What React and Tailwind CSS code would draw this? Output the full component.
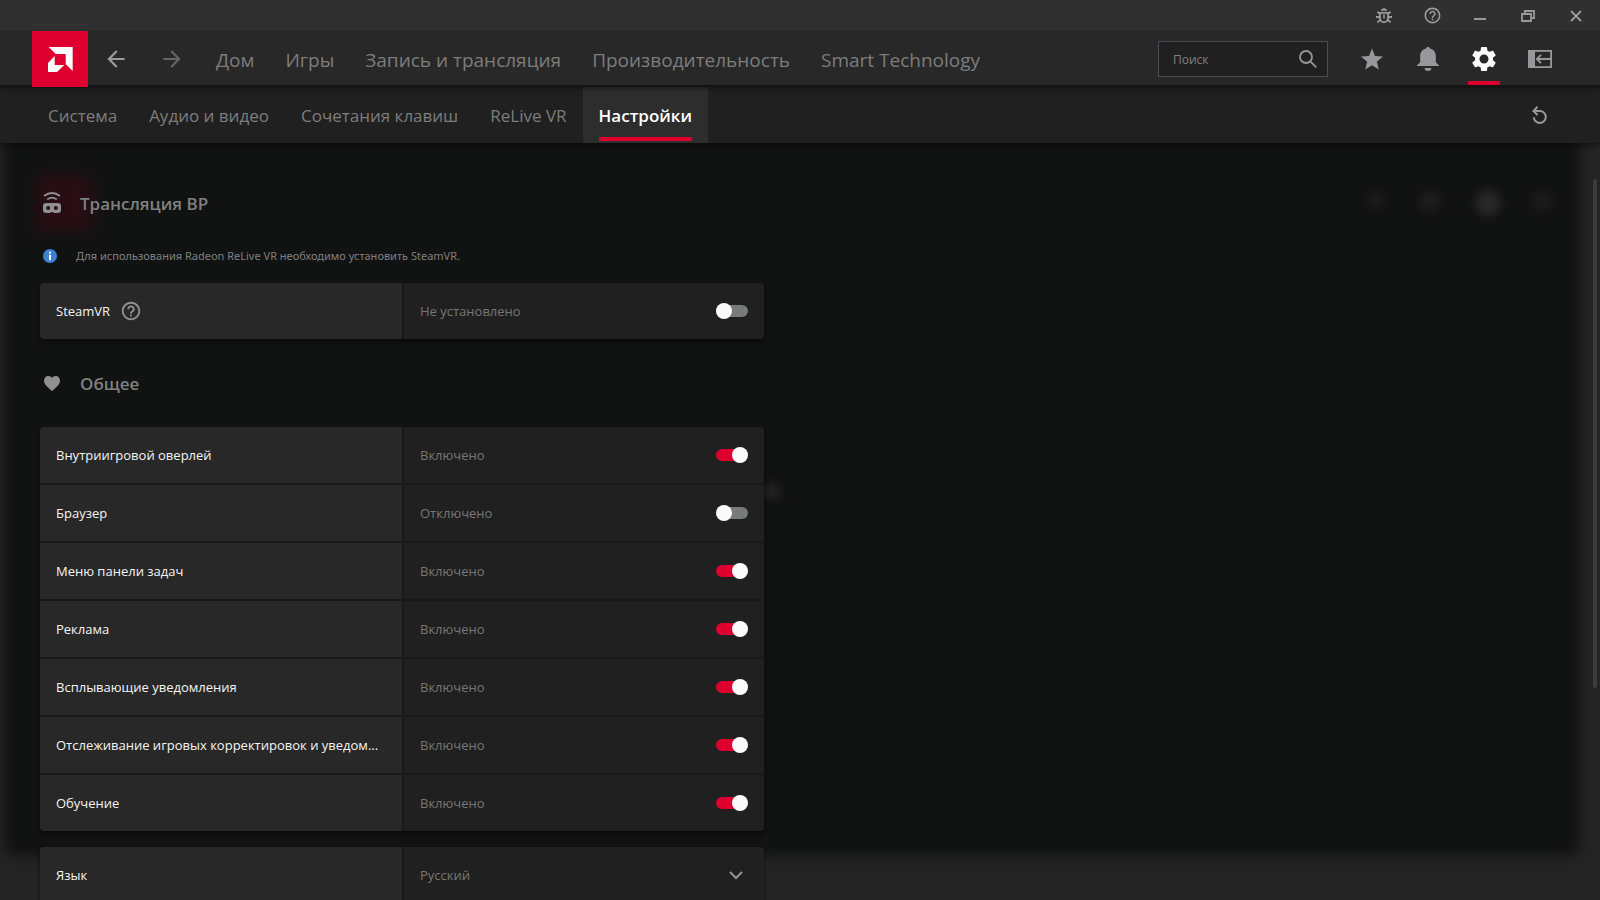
import { useState } from "react";
import { MdArrowBack, MdArrowForward, MdHelpOutline, MdSettings } from "react-icons/md";

const mainTabs = ["Дом", "Игры", "Запись и трансляция", "Производительность", "Smart Technology"];

const subTabs = ["Система", "Аудио и видео", "Сочетания клавиш", "ReLive VR", "Настройки"];

const generalOptions = [
  { id: "overlay", label: "Внутриигровой оверлей", on: true },
  { id: "browser", label: "Браузер", on: false },
  { id: "tray", label: "Меню панели задач", on: true },
  { id: "ads", label: "Реклама", on: true },
  { id: "toasts", label: "Всплывающие уведомления", on: true },
  { id: "tracking", label: "Отслеживание игровых корректировок и уведом...", on: true },
  { id: "tutorial", label: "Обучение", on: true },
];

function Logo() {
  return (
    <svg width="25" height="25" viewBox="0 0 25 25" fill="#fafafa">
      <path d="M.7 0H24.7V24L17.7 17.3V7H7.7Z" />
      <path d="M6.7 9V18H16.3L9 25H0V16Z" />
    </svg>
  );
}

function BugIcon() {
  return (
    <svg width="16" height="16" viewBox="0 0 16 16" fill="none" stroke="currentColor" strokeWidth="1.8">
      <path d="M5 2.8a3 2.6 0 0 1 6 0z" fill="currentColor" stroke="none" />
      <path d="M4 4.8h8v5.4a4 4 0 0 1-8 0z" />
      <path d="M8 6.500v4" strokeWidth="1.600" />
      <path d="M4 6 1.4 3.8M12 6l2.6-2.2M4 9H0M12 9h4M4.4 11.6l-3 2.8M11.6 11.6l3 2.8" />
    </svg>
  );
}

function MinimizeIcon() {
  return (
    <svg width="14" height="14" viewBox="0 0 14 14" fill="currentColor">
      <path d="M1 9h12v2H1z" />
    </svg>
  );
}

function RestoreIcon() {
  return (
    <svg width="14" height="12" viewBox="0 0 14 12" fill="none" stroke="currentColor" strokeWidth="1.8">
      <path d="M1 4h9v7H1z" />
      <path d="M3.8 4V1H13v7h-3" />
    </svg>
  );
}

function CloseIcon() {
  return (
    <svg width="12" height="12" viewBox="0 0 12 12" stroke="currentColor" strokeWidth="1.8">
      <path d="M1 1l10 10M11 1 1 11" />
    </svg>
  );
}

function SearchIcon() {
  return (
    <svg width="18" height="18" viewBox="0 0 18 18" fill="none" stroke="currentColor" strokeWidth="1.8">
      <circle cx="7" cy="7" r="6" />
      <path d="m11.3 11.3 6 6" />
    </svg>
  );
}

function StarIcon() {
  return (
    <svg width="22" height="22" viewBox="0 0 22 22" fill="currentColor">
      <path d="m11 .6 3 7.4 8 .6-6.1 5.1 1.9 7.7-6.8-4.2-6.8 4.2 1.9-7.7L0 8.6 8 8z" />
    </svg>
  );
}

function BellIcon() {
  return (
    <svg width="24" height="24" viewBox="0 0 24 24" fill="currentColor">
      <path d="M12 0c1.2 0 1.8.7 2 1.6C17.6 2.5 19.8 5.4 19.8 9v6.2L23.6 19H.4l3.800-3.800V9c0-3.600 2.200-6.500 5.800-7.400C10.200.7 10.800 0 12 0z" />
      <path d="M8.600 21h6.800a3.400 3 0 0 1-6.800 0z" />
    </svg>
  );
}

function DockIcon() {
  return (
    <svg width="24" height="18" viewBox="0 0 24 18" fill="none" stroke="currentColor" strokeWidth="1.8">
      <path d="M0 0h7v18H0z" fill="currentColor" stroke="none" />
      <path d="M.9.9h22.2v16.2H.9z" />
      <path d="M23 9H9M13 4.800 8.800 9l4.200 4.200" />
    </svg>
  );
}

function ResetIcon() {
  return (
    <svg width="16" height="18" viewBox="0 0 16 18" fill="none" stroke="currentColor" strokeWidth="2">
      <path d="M2 5h6.400a6 6 0 1 1-6.600 6.200" />
      <path d="M5.600.8 1.400 5l4.200 4" />
    </svg>
  );
}

function VrIcon() {
  return (
    <svg width="18" height="22" viewBox="0 0 18 22" fill="none" stroke="currentColor">
      <path d="M1 4Q9-2 17 4M4.200 7.400q4.800-3.600 9.600 0" strokeWidth="1.800" />
      <path
        d="M3 11h12a3 3 0 0 1 3 3v4a3 3 0 0 1-3 3h-3.500L9 20 6.500 21H3a3 3 0 0 1-3-3v-4a3 3 0 0 1 3-3zM5.200 14a2 2 0 1 0 0 4 2 2 0 0 0 0-4zM12.800 14a2 2 0 1 0 0 4 2 2 0 0 0 0-4z"
        fill="currentColor"
        fillRule="evenodd"
        stroke="none"
      />
    </svg>
  );
}

function HeartIcon() {
  return (
    <svg width="16" height="15" viewBox="0 0 16 15" fill="currentColor">
      <path d="M8 15C3.500 11.200 0 8.300 0 4.700 0 2 2 0 4.400 0 5.900 0 7.200.7 8 1.900 8.800.7 10.100 0 11.600 0 14 0 16 2 16 4.700c0 3.600-3.500 6.500-8 10.300z" />
    </svg>
  );
}

function InfoIcon() {
  return (
    <svg width="14" height="14" viewBox="0 0 14 14">
      <circle cx="7" cy="7" r="7" fill="#3f82d4" />
      <path d="M6 2.800h2v1.800H6zM6 5.800h2v5.400H6z" fill="#fff" />
    </svg>
  );
}

function Backdrop() {
  return (
    <div aria-hidden="true" className="absolute inset-0 overflow-hidden bg-[#242424]">
      <div className="absolute -top-4 bottom-11 left-1 right-5 rounded-xl bg-[#111312] blur-[6px]" />
      <div className="absolute left-9 top-8 h-14 w-14 bg-[#3a0a16]/60 blur-[8px]" />
      <div className="absolute right-[216px] top-12 h-4 w-4 rounded-full bg-[#1c1c1c] blur-[5px]" />
      <div className="absolute right-40 top-12 h-5 w-5 rounded-full bg-[#1e1e1e] blur-[5px]" />
      <div className="absolute right-25 top-12 h-6 w-6 rounded-full bg-[#2a2a2a] blur-[5px]" />
      <div className="absolute right-12 top-12 h-5 w-5 rounded-full bg-[#1c1c1c] blur-[5px]" />
      <div className="absolute left-[764px] top-[340px] h-4 w-4 rounded-full bg-[#242424] blur-[5px]" />
    </div>
  );
}

function Toggle({ id, checked, onChange }) {
  return (
    <input
      id={id}
      type="checkbox"
      role="switch"
      checked={checked}
      onChange={onChange}
      className="relative h-4 w-8 shrink-0 cursor-pointer appearance-none before:absolute before:inset-x-0 before:top-[2px] before:h-3 before:rounded-full before:bg-[#777b79] after:absolute after:left-0 after:top-0 after:h-4 after:w-4 after:rounded-full after:bg-[#fafafa] checked:before:bg-[#e00030] checked:after:left-4"
    />
  );
}

function Card({ children }) {
  return (
    <div className="grid w-full max-w-[724px] gap-[2px] overflow-hidden rounded bg-[#191919] shadow-[0_3px_4px_rgba(0,0,0,0.5)]">
      {children}
    </div>
  );
}

function Row({ id, label, help, children }) {
  return (
    <div className="grid h-14 grid-cols-[362fr_360fr] gap-[2px]">
      <div className="flex min-w-0 items-center gap-[10px] bg-[#282828] px-4 text-[#f5f5f5]">
        <label htmlFor={id} className="truncate pt-[2px]">
          {label}
        </label>
        {help && (
          <button type="button" aria-label="Справка" className="text-[#909296]">
            <MdHelpOutline size={22} />
          </button>
        )}
      </div>
      <div className="flex min-w-0 items-center justify-between bg-[#202020] px-4 text-[#777]">{children}</div>
    </div>
  );
}

function SectionTitle({ icon, children }) {
  return (
    <h2 className="flex h-6 items-center text-[17px] font-semibold text-[#808080]">
      <span className="flex w-6 justify-center text-[#909090]">{icon}</span>
      <span className="ml-4 pt-[2px]">{children}</span>
    </h2>
  );
}

export default function App() {
  const [steamVr, setSteamVr] = useState(false);
  const [options, setOptions] = useState(generalOptions);
  const [language, setLanguage] = useState("ru");

  const toggleOption = (id) => {
    setOptions(options.map((item) => (item.id === id ? { ...item, on: !item.on } : item)));
  };

  return (
    <div className="flex h-screen flex-col overflow-hidden bg-[#111312] font-['Open_Sans','Noto_Sans',sans-serif] text-[13px]">
      <div className="flex h-[31px] shrink-0 justify-end bg-[#303030] text-[#999a9e]">
        <button type="button" aria-label="Сообщить об ошибке" className="flex w-12 items-center justify-center">
          <BugIcon />
        </button>
        <button type="button" aria-label="Помощь" className="flex w-12 items-center justify-center">
          <MdHelpOutline size={19} />
        </button>
        <button type="button" aria-label="Свернуть" className="flex w-12 items-center justify-center">
          <MinimizeIcon />
        </button>
        <button type="button" aria-label="Восстановить" className="flex w-12 items-center justify-center">
          <RestoreIcon />
        </button>
        <button type="button" aria-label="Закрыть" className="flex w-12 items-center justify-center">
          <CloseIcon />
        </button>
      </div>

      <header className="relative z-20 flex h-[54px] shrink-0 items-start bg-[#282828] px-8 shadow-[0_3px_5px_rgba(0,0,0,0.5)]">
        <div className="flex h-14 w-14 shrink-0 items-center justify-center bg-[#e00030]">
          <Logo />
        </div>
        <div className="flex h-full min-w-0 flex-1 items-center pt-[2px]">
          <button type="button" aria-label="Назад" className="flex w-14 justify-center text-[#999a9e]">
            <MdArrowBack size={26} />
          </button>
          <button type="button" aria-label="Вперёд" className="flex w-14 justify-center text-[#63656a]">
            <MdArrowForward size={26} />
          </button>
          <nav className="flex gap-[31px] pl-4 pt-[2px] text-[19px] text-[#7d7d7d]">
            {mainTabs.map((tab) => (
              <a key={tab} href="#" className="whitespace-nowrap">
                {tab}
              </a>
            ))}
          </nav>

          <div className="ml-auto flex shrink-0 items-center self-stretch text-[#97989c]">
            <div className="mr-4 flex h-9 w-[170px] items-center border border-[#4a4c58] bg-[#202020] pl-[14px] pr-[10px]">
              <input
                type="text"
                aria-label="Поиск"
                placeholder="Поиск"
                className="w-full min-w-0 bg-transparent pt-[2px] text-[12px] text-[#ddd] outline-none placeholder:text-[#808080]"
              />
              <button type="button" aria-label="Найти">
                <SearchIcon />
              </button>
            </div>
            <button type="button" aria-label="Избранное" className="flex w-14 justify-center">
              <StarIcon />
            </button>
            <button type="button" aria-label="Уведомления" className="flex w-14 justify-center">
              <BellIcon />
            </button>
            <button
              type="button"
              aria-label="Параметры"
              className="relative flex w-14 items-center justify-center self-stretch text-[#fafafa]"
            >
              <MdSettings size={30} />
              <span className="absolute inset-x-3 bottom-0 h-1 bg-[#e00030]" />
            </button>
            <button type="button" aria-label="Закрепить панель" className="flex w-14 justify-center">
              <DockIcon />
            </button>
          </div>
        </div>
      </header>

      <div className="relative z-10 flex h-[58px] shrink-0 items-stretch justify-between bg-[#202020] px-8 pt-[2px] shadow-[0_3px_5px_rgba(0,0,0,0.4)]">
        <nav className="flex text-[17px] text-[#7d7d7d]">
          {subTabs.map((tab) =>
            tab === "Настройки" ? (
              <a
                key={tab}
                href="#"
                aria-current="page"
                className="relative flex items-center bg-[#2d2d2d] px-4 pt-[2px] font-semibold text-white"
              >
                {tab}
                <span className="absolute inset-x-4 bottom-[2px] h-1 bg-[#e00030]" />
              </a>
            ) : (
              <a key={tab} href="#" className="flex items-center whitespace-nowrap px-4 pt-[2px]">
                {tab}
              </a>
            )
          )}
        </nav>
        <button type="button" aria-label="Сбросить" className="flex w-14 items-center justify-center text-[#97989c]">
          <ResetIcon />
        </button>
      </div>

      <main className="relative min-h-0 flex-1 overflow-hidden">
        <Backdrop />
        <div className="relative px-10 pt-12">
          <SectionTitle icon={<VrIcon />}>Трансляция ВР</SectionTitle>
          <p className="mb-[18px] mt-8 flex h-[18px] items-center font-['Noto_Sans',sans-serif] text-[11px] text-[#808080]">
            <span className="ml-[3px] mr-[19px]">
              <InfoIcon />
            </span>
            Для использования Radeon ReLive VR необходимо установить SteamVR.
          </p>
          <Card>
            <Row id="steamvr" label="SteamVR" help>
              <span className="pt-[2px]">Не установлено</span>
              <Toggle id="steamvr" checked={steamVr} onChange={() => setSteamVr(!steamVr)} />
            </Row>
          </Card>

          <div className="mb-8 mt-8">
            <SectionTitle icon={<HeartIcon />}>Общее</SectionTitle>
          </div>
          <Card>
            {options.map((item) => (
              <Row key={item.id} id={item.id} label={item.label}>
                <span className="pt-[2px]">{item.on ? "Включено" : "Отключено"}</span>
                <Toggle id={item.id} checked={item.on} onChange={() => toggleOption(item.id)} />
              </Row>
            ))}
          </Card>

          <div className="mt-4">
            <Card>
              <Row id="language" label="Язык">
                <select
                  id="language"
                  value={language}
                  onChange={(e) => setLanguage(e.target.value)}
                  className="h-full min-w-0 flex-1 appearance-none bg-transparent pt-[2px] outline-none"
                >
                  <option value="ru">Русский</option>
                  <option value="en">English</option>
                </select>
                <svg
                  width="14"
                  height="9"
                  viewBox="0 0 14 9"
                  fill="none"
                  stroke="#909296"
                  strokeWidth="2"
                  className="pointer-events-none mr-[5px]"
                >
                  <path d="m1 1 6 6 6-6" />
                </svg>
              </Row>
            </Card>
          </div>
        </div>
        <div className="absolute right-[3px] top-9 h-[509px] w-1 rounded-full bg-[#3a3a40]" />
      </main>
    </div>
  );
}
